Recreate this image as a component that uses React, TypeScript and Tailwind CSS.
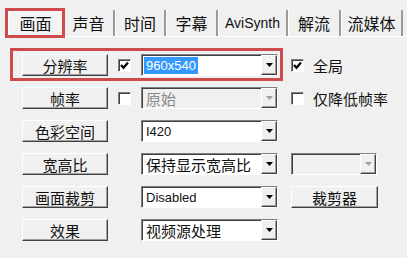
import React from "react";

const cjk = "font-['Noto_Sans_CJK_SC','Noto_Sans',sans-serif]";
const latin = "font-['Liberation_Sans','DejaVu_Sans',sans-serif]";

// Win classic raised / sunken frames
const raised =
  "border border-t-white border-l-white border-r-[#404040] border-b-[#404040] shadow-[inset_-1px_-1px_0_#a0a0a0]";
const sunken =
  "border border-t-[#808080] border-l-[#808080] border-r-white border-b-white shadow-[inset_1px_1px_0_#404040]";

function Btn({ label, w = "w-[86px]" }: { label: string; w?: string }) {
  return (
    <div
      className={`${w} h-[22px] bg-[#f0f0f0] ${raised} flex items-center justify-center text-[15px] leading-none text-[#111] ${cjk}`}
    >
      {label}
    </div>
  );
}

function Check({ checked, label }: { checked?: boolean; label?: string }) {
  return (
    <div className="flex items-center gap-[9px]">
      <div className={`w-[13px] h-[13px] bg-white ${sunken} flex items-center justify-center`}>
        {checked && (
          <svg width="9" height="9" viewBox="0 0 9 9">
            <path d="M1 4 L3.5 6.8 L8 1.5" stroke="#000" strokeWidth="2.2" fill="none" />
          </svg>
        )}
      </div>
      {label && <span className={`text-[15px] leading-none text-[#111] ${cjk}`}>{label}</span>}
    </div>
  );
}

function Select({
  value,
  disabled,
  selected,
  latinText,
  w = "w-[137px]",
}: {
  value: string;
  disabled?: boolean;
  selected?: boolean;
  latinText?: boolean;
  w?: string;
}) {
  return (
    <div
      className={`${w} h-[22px] ${disabled ? "bg-[#f0f0f0]" : "bg-white"} ${sunken} flex items-stretch`}
    >
      <div className="flex-1 flex items-center pl-[2px] overflow-hidden whitespace-nowrap">
        <span
          className={`${latinText ? `${latin} text-[13px] leading-[17px]` : `${cjk} text-[15px] leading-[17px]`} px-[2px] ${
            selected ? "bg-[#3399ff] text-white" : disabled ? "text-[#8a8a8a]" : "text-[#111]"
          }`}
        >
          {value}
        </span>
      </div>
      <div className={`w-[16px] bg-[#f0f0f0] ${raised} flex items-center justify-center`}>
        <svg width="7" height="4" viewBox="0 0 7 4">
          <path d="M0 0 H7 L3.5 4 Z" fill={disabled ? "#a0a0a0" : "#000"} />
        </svg>
      </div>
    </div>
  );
}

const tabs = [
  { label: "画面", w: "w-[55px]" },
  { label: "声音", w: "w-[52px]" },
  { label: "时间", w: "w-[51px]" },
  { label: "字幕", w: "w-[52px]" },
  { label: "AviSynth", w: "w-[70px]", latin: true },
  { label: "解流", w: "w-[53px]" },
  { label: "流媒体", w: "w-[62px]" },
];

export default function App() {
  return (
    <div className="relative w-[407px] h-[258px] bg-[#f0f0f0] overflow-hidden">
      {/* tab strip */}
      <div className="flex pl-[8px] pt-[10px] h-[37px] border-b border-b-white">
        {tabs.map((t, i) => (
          <div
            key={t.label}
            className={`${t.w} flex items-center ${i === 0 ? "justify-center pt-[2px] mt-[-2px] bg-[#f3f3f3] border-l border-l-white border-r border-r-[#a0a0a0]" : "justify-center border-r-2 border-r-[#9a9a9a] border-l border-l-white"} ${
              t.latin ? `${latin} text-[14px]` : `${cjk} text-[16px]`
            } leading-none text-[#111]`}
          >
            {t.label}
          </div>
        ))}
      </div>

      {/* settings grid */}
      <div className="grid grid-cols-[86px_13px_137px_auto] gap-x-[10px] gap-y-[11px] items-center pl-[22px] pt-[17px]">
        <Btn label="分辨率" />
        <Check checked />
        <Select value="960x540" selected latinText />
        <div className="ml-[3px]">
          <Check checked label="全局" />
        </div>

        <Btn label="帧率" />
        <Check />
        <Select value="原始" disabled />
        <div className="ml-[3px]">
          <Check label="仅降低帧率" />
        </div>

        <Btn label="色彩空间" />
        <div />
        <Select value="I420" latinText />
        <div />

        <Btn label="宽高比" />
        <div />
        <Select value="保持显示宽高比" />
        <div className="ml-[3px]">
          <Select value="" disabled w="w-[86px]" />
        </div>

        <Btn label="画面裁剪" />
        <div />
        <Select value="Disabled" latinText />
        <div className="ml-[3px]">
          <Btn label="裁剪器" w="w-[87px]" />
        </div>

        <Btn label="效果" />
        <div />
        <Select value="视频源处理" />
        <div />
      </div>

      {/* red annotation frames */}
      <div className="absolute left-[5px] top-[8px] w-[60px] h-[30px] border-[3px] border-[#cf4b4b] pointer-events-none" />
      <div className="absolute left-[10px] top-[48px] w-[273px] h-[33px] border-[3px] border-[#cf4b4b] pointer-events-none" />
    </div>
  );
}
